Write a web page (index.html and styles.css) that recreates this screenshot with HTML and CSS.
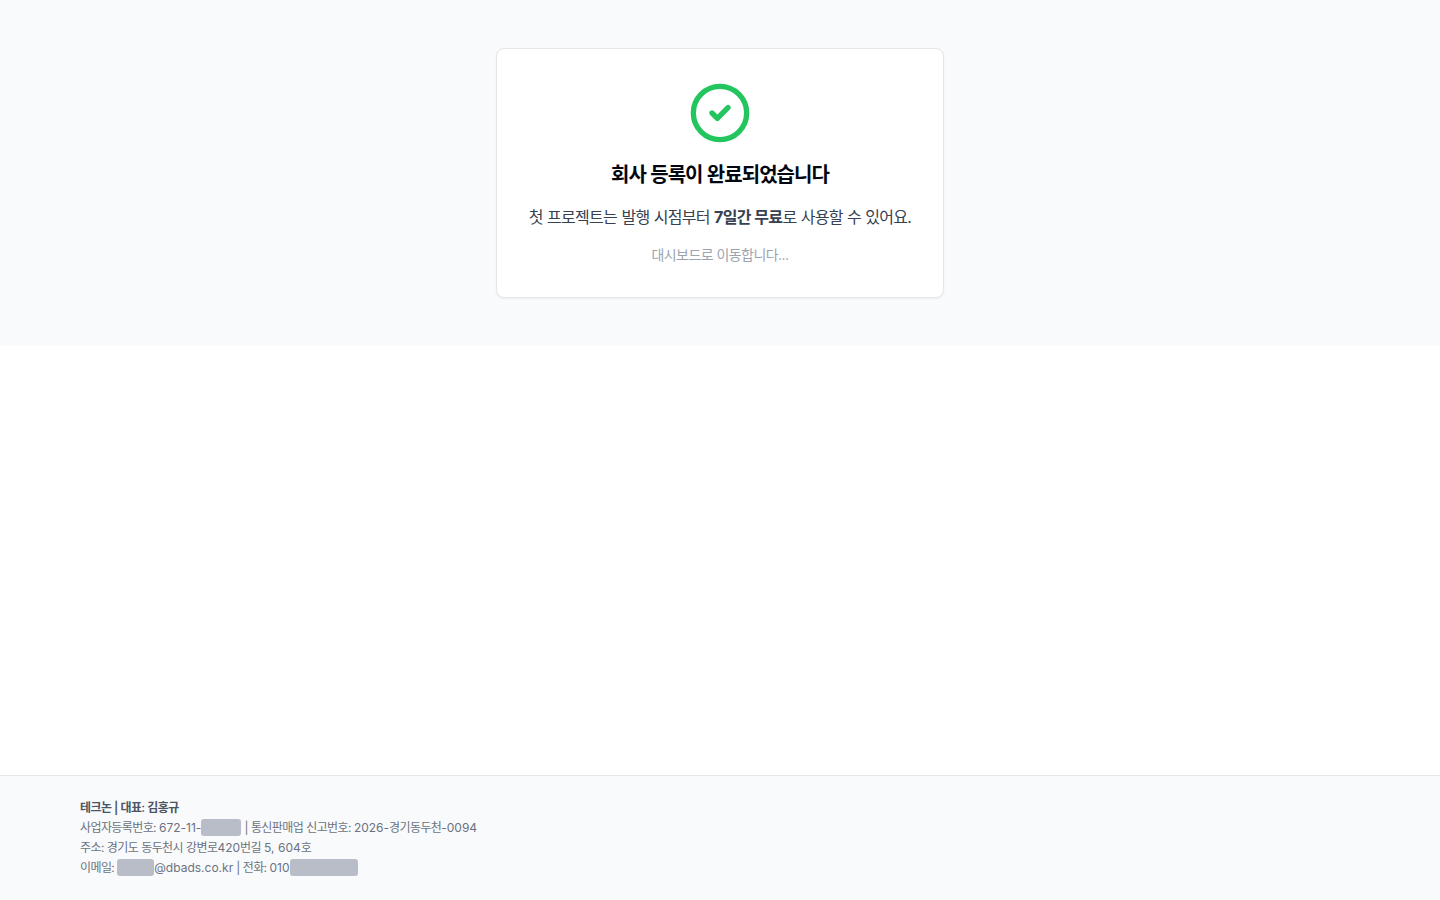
FILE: index.html
```html
<!DOCTYPE html>
<html lang="ko">
<head>
    <meta charset="UTF-8">
    <meta name="viewport" content="width=device-width, initial-scale=1.0">
    <title>회사 등록 완료</title>
    <link rel="stylesheet" href="styles.css">
</head>
<body>
    <main class="page-top">
        <div class="card">
            <svg class="check-icon" viewBox="0 0 24 24" fill="none" stroke="currentColor" stroke-width="2" stroke-linecap="round" stroke-linejoin="round">
                <circle cx="12" cy="12" r="10"></circle>
                <path d="m9 12 2 2 4-4"></path>
            </svg>
            <h1 class="title">회사 등록이 완료되었습니다</h1>
            <p class="desc">첫 프로젝트는 발행 시점부터 <strong>7일간 무료</strong>로 사용할 수 있어요.</p>
            <p class="hint">대시보드로 이동합니다...</p>
        </div>
    </main>

    <div class="spacer"></div>

    <footer class="footer">
        <p class="company">테크논 | 대표: 김홍규</p>
        <p>사업자등록번호: <span class="latin">672-11-</span><span class="redact redact-biz"></span> | 통신판매업 신고번호: <span class="latin">2026-</span>경기동두천<span class="latin">-0094</span></p>
        <p>주소: 경기도 동두천시 강변로<span class="latin">420</span>번길 <span class="latin">5, 604</span>호</p>
        <p>이메일: <span class="redact redact-mail"></span><span class="latin">@dbads.co.kr</span> | 전화: <span class="latin">010</span><span class="redact redact-phone"></span></p>
    </footer>
</body>
</html>
```

FILE: styles.css
```css
* { box-sizing: border-box; }
body { margin: 0; min-height: 900px; display: flex; flex-direction: column; background-color: white; font-family: Inter, "Noto Sans CJK KR", sans-serif; }
p { margin: 0; }

.page-top { display: flex; justify-content: center; padding: 48px 0; background-color: #f9fafb; }
.card { width: 448px; padding: 32px; display: flex; flex-direction: column; align-items: center; text-align: center; background-color: white; border: 1px solid #e5e7eb; border-radius: 8px; box-shadow: 0 1px 2px rgba(0, 0, 0, 0.05); }
.check-icon { width: 64px; height: 64px; color: #22c55e; margin-bottom: 16px; }
.title { margin: 0 0 16px; font-size: 20px; line-height: 28px; font-weight: 700; color: #030712; letter-spacing: -0.95px; word-spacing: 0.5px; }
.desc { margin-bottom: 16px; font-size: 16px; line-height: 24px; color: #374151; white-space: nowrap; letter-spacing: -0.68px; word-spacing: 0.4px; }
.desc strong { font-weight: 700; }
.hint { font-size: 14px; line-height: 20px; color: #9ca3af; letter-spacing: -0.55px; }

.spacer { flex: 1; }

.footer { height: 125px; padding: 22px 80px 0; background-color: #f9fafb; border-top: 1px solid #e5e7eb; font-size: 12px; line-height: 20px; color: #6b7280; letter-spacing: -0.6px; word-spacing: 0.3px; }
.latin { letter-spacing: 0; }
.company { font-weight: 600; color: #4b5563; }
.redact { display: inline-block; height: 17px; vertical-align: -4px; background-color: #b9bdc7; border-radius: 3px; filter: blur(0.6px); }
.redact-biz { width: 40px; }
.redact-mail { width: 37px; }
.redact-phone { width: 68px; }
```
